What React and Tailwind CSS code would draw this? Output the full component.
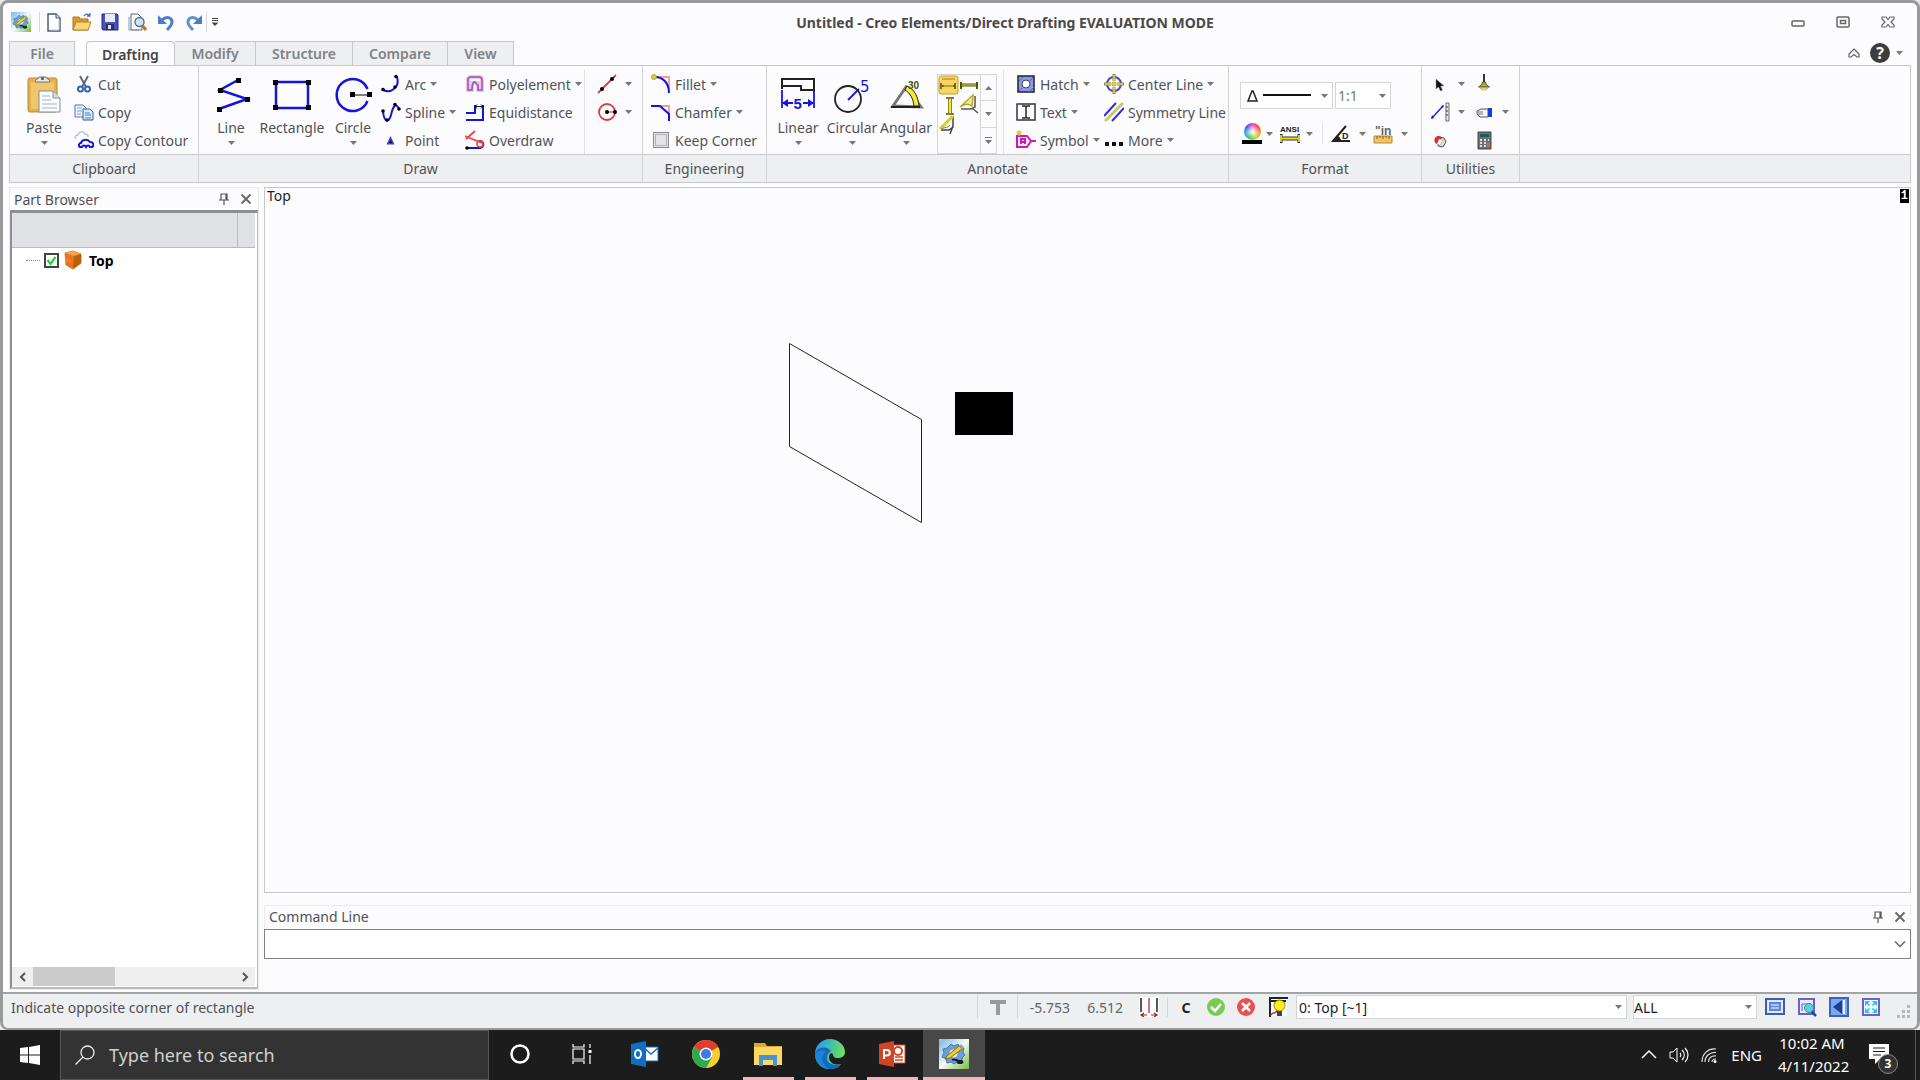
import { useState } from "react";

function Caret({ className = "" }) {
  return (
    <svg viewBox="0 0 7 4" className={`h-1 w-[7px] shrink-0 fill-[#777] ${className}`} aria-hidden="true">
      <path d="M0 0h7L3.5 4z" />
    </svg>
  );
}

function Icon({ size = "size-5", box = "0 0 20 20", children }) {
  return (
    <svg viewBox={box} className={`${size} shrink-0`} fill="none" aria-hidden="true">
      {children}
    </svg>
  );
}

const BLUE = "#1414e0";

/* ---------- quick access icons ---------- */

const AppIcon = ({ size = "size-5" }) => (
  <Icon size={size} box="0 0 30 30">
    <defs>
      <linearGradient id="appbg" x1="0" y1="0" x2="1" y2="1">
        <stop offset="0.1" stopColor="#8fc3e6" />
        <stop offset="0.5" stopColor="#f4faf6" />
        <stop offset="1" stopColor="#76b943" />
      </linearGradient>
    </defs>
    <path d="M0 0h30v30H0z" fill="url(#appbg)" />
    <path d="M12 5l3 2 4-2 2 3 4 1-1 4 2 3-3 3v4h-5l-3 2-3-2-4 1-1-4-4-2 2-4-1-4 4-1z" fill="#6d9fd3" stroke="#4276b4" />
    <circle cx="14.500" cy="14.500" r="4" fill="#dcebf7" />
    <path d="M8 17L20 7l3 3-12 9-5 1z" fill="#f3cf23" stroke="#84700f" />
    <path d="M20 7l2-2 3 3-2 2z" fill="#9fa3a8" />
    <path d="M13 21c3-2 6 2 10 1" stroke="#16202b" strokeWidth="2" />
    <ellipse cx="21" cy="23" rx="3.500" ry="2" fill="#16202b" />
  </Icon>
);

const NewIcon = () => (
  <Icon>
    <path d="M4 2h8l4 4v13H4z" fill="#fff" stroke="#3f5878" strokeWidth="1.400" />
    <path d="M12 2v4h4" fill="#cfdbe8" stroke="#3f5878" />
    <path d="M15 8v10H6" stroke="#b9c6d6" />
  </Icon>
);

const OpenIcon = () => (
  <Icon>
    <path d="M1 5h6l1 2h8v11H1z" fill="#d99a27" stroke="#a8761d" />
    <path d="M4 10h15l-3 8H1z" fill="#fbd57c" stroke="#b58224" />
    <path d="M12 4c2-3 4-2 6 0m0-3v3h-3" stroke="#4e73a5" strokeWidth="1.300" />
  </Icon>
);

const SaveIcon = () => (
  <Icon>
    <path d="M2 2h15l1 1v15H3l-1-1z" fill="#4b4fc0" stroke="#24287c" />
    <path d="M5 2h10v8H5z" fill="#e7eaf8" />
    <path d="M6 12h8v6H6z" fill="#2a2d66" />
    <path d="M8 13h3v4H8z" fill="#dfe3f4" />
  </Icon>
);

const PreviewIcon = () => (
  <Icon>
    <path d="M3 2h7l4 4v12H3z" fill="#f6f9fb" stroke="#556b7c" />
    <path d="M1 5v13h10" stroke="#8b9aa6" />
    <path d="M14 13l4 5" stroke="#b97a31" strokeWidth="3" />
    <circle cx="11.500" cy="10" r="4.500" fill="#cfe4f2" stroke="#5d6f7d" strokeWidth="1.400" />
  </Icon>
);

const UndoIcon = () => (
  <Icon>
    <path d="M6 8c4-4 10-3 10 2 0 3-2 5-5 8" stroke="#4a7cc8" strokeWidth="3" />
    <path d="M2 3v9h9z" fill="#4a7cc8" />
  </Icon>
);

const RedoIcon = () => (
  <Icon>
    <path d="M14 8C10 4 4 5 4 10c0 3 2 5 5 8" stroke="#5e93cc" strokeWidth="3" />
    <path d="M18 3v9H9z" fill="#4a7cc8" />
  </Icon>
);

/* ---------- ribbon icons ---------- */

const PasteIcon = () => (
  <Icon size="size-10" box="0 0 40 40">
    <rect x="4" y="3" width="29" height="34" rx="2" fill="#e3b04f" stroke="#b98a38" />
    <rect x="7" y="7" width="23" height="27" fill="#f0c56c" />
    <path d="M11 7c0-3 4-3 4-5h7c0 2 4 2 4 5z" fill="#e8ebed" stroke="#6c757b" />
    <circle cx="18.500" cy="3.500" r="1.500" fill="#555" />
    <path d="M15 16h14l7 7v14H15z" fill="#fbfcfe" stroke="#7d8fa6" />
    <path d="M29 16v7h7" fill="#d6dfe9" stroke="#7d8fa6" />
    <path d="M18 21h8m-8 4h9m-9 4h15m-15 4h15" stroke="#a2b0c1" />
  </Icon>
);

const CutIcon = () => (
  <Icon>
    <path d="M6 2l6 11M14 2L8 13" stroke="#5b6b7e" strokeWidth="2" />
    <circle cx="6.500" cy="15" r="2.500" stroke="#2d65b5" strokeWidth="2" />
    <circle cx="13.500" cy="15" r="2.500" stroke="#2d65b5" strokeWidth="2" />
  </Icon>
);

const CopyIcon = () => (
  <Icon>
    <path d="M1 3h8l3 3v9H1z" fill="#eef4fc" stroke="#4d79b3" />
    <path d="M3 6h5M3 9h5M3 12h4" stroke="#7ba0d2" />
    <path d="M9 7h7l3 3v8H9z" fill="#dbe8f9" stroke="#2f5f9f" />
    <path d="M11 11h5m-5 2h6m-6 3h6" stroke="#5482c0" />
  </Icon>
);

const ContourIcon = () => (
  <Icon>
    <path d="M2 9c-2-3 1-4 2-4 1-4 6-4 7-1 3 0 3 2 3 3" stroke="#b8c3cf" strokeWidth="1.500" />
    <path d="M6 17c-2-1-1-4 1-4 1-4 7-4 9-1 4 0 4 4 2 5h-2c-1-2-3-2-4 0-1-2-3-2-4 0z" stroke={BLUE} strokeWidth="2" />
  </Icon>
);

const LineIcon = () => (
  <Icon size="size-10" box="0 0 40 40">
    <path d="M27 5L9 15l27 9L8 34" stroke={BLUE} strokeWidth="2.500" />
    <path d="M25 3h5v5h-5zM7 13h5v5H7zM34 22h5v5h-5zM6 32h5v5H6z" fill="#000" />
  </Icon>
);

const RectIcon = () => (
  <Icon size="size-10" box="0 0 40 40">
    <path d="M4 7h32v26H4z" stroke={BLUE} strokeWidth="2.500" />
    <path d="M1 5h5v5H1zM34 5h5v5h-5zM1 30h5v5H1zM34 30h5v5h-5z" fill="#000" />
  </Icon>
);

const CircleIcon = () => (
  <Icon size="size-10" box="0 0 40 40">
    <path d="M34.500 14A16 16 0 1 0 34.500 26" stroke={BLUE} strokeWidth="2.500" />
    <path d="M20 20h16" stroke="#555" strokeWidth="1.500" />
    <path d="M17 17h5v5h-5zM34 17h5v5h-5z" fill="#000" />
  </Icon>
);

const ArcIcon = () => (
  <Icon>
    <path d="M2 16c8 4 17-3 14-13" stroke={BLUE} strokeWidth="2" />
    <circle cx="2" cy="15.500" r="1.800" fill="#000" />
    <circle cx="15" cy="2.500" r="1.800" fill="#000" />
    <circle cx="14" cy="13" r="1.800" fill="#000" />
  </Icon>
);

const SplineIcon = () => (
  <Icon>
    <path d="M2 9c1 12 6 12 8 4 2-9 5-13 8-6" stroke={BLUE} strokeWidth="2" />
    <circle cx="2" cy="9" r="1.800" fill="#000" />
    <circle cx="6" cy="18" r="1.800" fill="#000" />
    <circle cx="14" cy="2.500" r="1.800" fill="#000" />
    <circle cx="18" cy="7" r="1.800" fill="#000" />
  </Icon>
);

const PointIcon = () => (
  <Icon>
    <path d="M9.500 6l4 8.500h-8z" fill="#3c3cdc" />
    <path d="M9.500 10l1.500 3H8z" fill="#111" />
  </Icon>
);

const PolyIcon = () => (
  <Icon>
    <path d="M3 16V6c0-2 1-3 3-3h8c2 0 3 1 3 3v10h-4V9H7v7z" stroke="#f9c3d0" strokeWidth="4" />
    <path d="M3 16V6c0-2 1-3 3-3h8c2 0 3 1 3 3v10h-4v-5c-2 0-2-4-4-3s-2 4-2 8z" stroke="#7c5ad8" strokeWidth="1.500" />
  </Icon>
);

const EquiIcon = () => (
  <Icon>
    <path d="M1 11h9V3M1 18h17V3" stroke={BLUE} strokeWidth="2" />
    <path d="M10 4.500h8m-6-2l-2 2 2 2m4-4l2 2-2 2" stroke="#111" />
  </Icon>
);

const OverdrawIcon = () => (
  <Icon>
    <path d="M0 6l17 7M10 1L1 9" stroke="#ee4444" strokeWidth="1.800" />
    <path d="M2 18h13c5-1 4-8-1-7" stroke={BLUE} strokeWidth="2" />
    <circle cx="15" cy="14" r="3" stroke="#ee4444" strokeWidth="1.500" />
    <circle cx="2" cy="18" r="1.800" fill="#000" />
  </Icon>
);

const RedLineIcon = () => (
  <Icon>
    <path d="M1 19L19 1" stroke="#e03a3a" strokeWidth="1.800" />
    <circle cx="5" cy="15" r="2" fill="#000" />
    <circle cx="15" cy="5" r="2" fill="#000" />
  </Icon>
);

const RedCircleIcon = () => (
  <Icon>
    <circle cx="10" cy="10" r="8" stroke="#e03a3a" strokeWidth="1.800" />
    <path d="M10 10h8" stroke="#555" />
    <circle cx="10" cy="10" r="2" fill="#000" />
    <circle cx="18" cy="10" r="2" fill="#000" />
  </Icon>
);

const FilletIcon = () => (
  <Icon>
    <path d="M4 3h14v12" stroke="#f49a9a" strokeWidth="1.800" />
    <path d="M4 3c8 0 14 6 14 16" stroke={BLUE} strokeWidth="2" />
    <circle cx="3" cy="3" r="2.500" fill="#d9d63a" stroke="#8f8d21" strokeWidth="0.700" />
  </Icon>
);

const ChamferIcon = () => (
  <Icon>
    <path d="M8 4h10v10" stroke="#f49a9a" strokeWidth="1.800" />
    <path d="M0 4h9l9 8v7" stroke={BLUE} strokeWidth="2" />
  </Icon>
);

const LinearIcon = () => (
  <Icon size="size-10" box="0 0 40 40">
    <path d="M4 14V4h32v11H23v-4H4" stroke="#222" strokeWidth="2" />
    <path d="M4 15v18M36 16v17M5 28h10M25 28h10" stroke={BLUE} strokeWidth="1.800" />
    <path d="M4 28l6-4v8zM36 28l-6-4v8z" fill={BLUE} />
    <text x="15.500" y="34" fontSize="15" fontWeight="700" fill={BLUE} fontFamily="Liberation Sans">5</text>
  </Icon>
);

const CircularIcon = () => (
  <Icon size="size-10" box="0 0 40 40">
    <circle cx="16" cy="24" r="13" stroke="#222" strokeWidth="1.800" />
    <path d="M16 25l11-11" stroke={BLUE} strokeWidth="1.800" />
    <text x="28" y="17" fontSize="15" fill={BLUE} fontFamily="DejaVu Sans">5</text>
  </Icon>
);

const AngularIcon = () => (
  <Icon size="size-10" box="0 0 40 40">
    <path d="M7 31L20 12l15 20z" stroke="#777" strokeWidth="3" />
    <path d="M21 11c7 3 11 10 12 20h-5c-1-8-4-13-9-16z" fill="#f2ee2c" stroke="#222" />
    <path d="M5 32h29" stroke="#222" strokeWidth="2" />
    <text x="22" y="14" fontSize="10" fontWeight="700" fill="#4d4a0a" fontFamily="Liberation Sans">30</text>
  </Icon>
);

const GalleryArt = () => (
  <svg viewBox="0 0 42 78" className="h-[78px] w-[42px]" fill="none" aria-hidden="true">
    <rect x="1" y="1" width="19" height="18" rx="2" fill="#fad564" stroke="#c89a2c" />
    <path d="M4 4h13" stroke="#a77d1d" />
    <path d="M4 11h13M3 8v6M17 8v6" stroke="#4f4c0a" strokeWidth="1.500" />
    <path d="M6 11h9" stroke="#e8e22c" />
    <path d="M24 10h14" stroke="#55520d" strokeWidth="3" />
    <path d="M23 7v7M39 7v7" stroke="#55520d" strokeWidth="2" />
    <path d="M24 10h14" stroke="#e8e22c" />
    <path d="M12 24v14" stroke="#8d8616" strokeWidth="4" />
    <path d="M8 23h8M8 39h8" stroke="#55520d" strokeWidth="1.500" />
    <path d="M12 24v14" stroke="#f0ea3a" strokeWidth="2" />
    <path d="M23 34h10l4-2V21M34 33l6 5" stroke="#555" strokeWidth="1.500" />
    <path d="M22 32l13-12-1 11c-4-3-8-2-12 1z" fill="#efe9a5" stroke="#b6ac22" strokeWidth="1.500" />
    <path d="M3 55h8l4-3V41M15 51l-3 8" stroke="#444" strokeWidth="1.500" />
    <path d="M2 54l13-13" stroke="#d5cb2a" strokeWidth="3" />
    <path d="M3 54c4-2 7-1 9-4" stroke="#8d8616" />
  </svg>
);

const HatchIcon = () => (
  <Icon>
    <path d="M2 2h16v16H2z" fill="#8f96f0" stroke="#222" strokeWidth="1.500" />
    <circle cx="10" cy="10" r="4" fill="#fff" stroke="#444" />
    <path d="M3 7l4-4M3 17l3-3m7 4l5-5m-4-6l3-4" stroke="#5a61cd" />
  </Icon>
);

const TextIcon = () => (
  <Icon>
    <path d="M1 2h18v16H1z" fill="#fff" stroke="#333" strokeWidth="1.500" />
    <path d="M6 4h3l1 1 1-1h3M6 16h3l1-1 1 1h3M10 5v10" stroke="#222" strokeWidth="1.500" />
  </Icon>
);

const SymbolIcon = () => (
  <Icon>
    <path d="M1 6h10l4 5-4 6H1zM15 11h5" fill="#fff" stroke="#d811c6" strokeWidth="2" />
    <path d="M5 14V9h4v5M5 12h4" stroke="#d811c6" strokeWidth="2" />
    <circle cx="3" cy="3" r="2.500" fill="#e0cf3b" />
  </Icon>
);

const CenterIcon = () => (
  <Icon>
    <circle cx="10" cy="10" r="7" stroke="#4048d0" strokeWidth="2" />
    <path d="M10 0v20M0 10h20" stroke="#8d8433" strokeWidth="3" strokeDasharray="7 1 4 1 7" />
    <path d="M10 1v18M1 10h18" stroke="#e6da5c" strokeWidth="1.500" />
  </Icon>
);

const SymmetryIcon = () => (
  <Icon>
    <path d="M0 14L12 1M8 19L20 6" stroke="#2d33dc" strokeWidth="2" />
    <path d="M1 19L19 1" stroke="#cfc56a" strokeWidth="3" />
  </Icon>
);

const MoreIcon = () => (
  <Icon>
    <path d="M1 12h4v4H1zM8 12h4v4H8zM15 12h4v4h-4z" fill="#111" />
  </Icon>
);

const AnsiIcon = () => (
  <Icon>
    <text x="0" y="8" fontSize="8" fontWeight="700" fill="#222" fontFamily="Liberation Sans">ANSI</text>
    <path d="M1 10v9M19 10v9" stroke="#222" strokeWidth="3" />
    <path d="M2 14.500h16" stroke="#333" strokeWidth="4" />
    <path d="M1 11v7M19 11v7M2 14.500h16" stroke="#e5de2b" strokeWidth="1.800" />
  </Icon>
);

const AngleIcon = () => (
  <Icon>
    <path d="M15 2L2 17h17" stroke="#222" strokeWidth="2" />
    <path d="M7 12c2 1 3 3 3 5H3z" fill="#222" />
    <text x="11" y="15" fontSize="9" fontWeight="700" fill="#222" fontFamily="Liberation Sans">D</text>
  </Icon>
);

const RulerIcon = () => (
  <Icon>
    <path d="M1 12h18v7H1z" fill="#f0c565" stroke="#b58a31" />
    <path d="M4 12v3m3-3v2m3-2v3m3-3v2m3-2v3" stroke="#80601c" />
    <text x="2" y="11" fontSize="12" fontWeight="700" fill="#666" fontFamily="Liberation Sans">"in</text>
  </Icon>
);

const PointerIcon = () => (
  <Icon>
    <path d="M6 5v10l2.500-2 2 4 2-1-2-4H14z" fill="#111" stroke="#888" strokeWidth="0.500" />
  </Icon>
);

const LampIcon = () => (
  <Icon>
    <path d="M10 0v9" stroke="#222" strokeWidth="1.800" />
    <path d="M8.500 8h3l1 3 3 2H4.500l3-2z" fill="#b4b02a" stroke="#333" strokeWidth="0.800" />
    <path d="M6 14h8l-2 2H8z" fill="#f2ee67" stroke="#888" strokeWidth="0.500" />
  </Icon>
);

const MeasureIcon = () => (
  <Icon>
    <path d="M2 16L13 4" stroke={BLUE} strokeWidth="1.300" />
    <path d="M1 17l1-4 2 3zM14 3l-3 1 2 2z" fill={BLUE} />
    <path d="M16 1h3v18h-3z" fill="#eee" stroke="#667" />
    <path d="M16 5h2m-2 4h2m-2 4h2" stroke="#335" />
  </Icon>
);

const HandIcon = () => (
  <Icon>
    <path d="M14 7H7L3 9v3l3 3h8z" fill="#f3f3f3" stroke="#555" />
    <path d="M3 10h6m-5 2h5" stroke="#777" />
    <path d="M14 6h4v9h-4z" fill="#1c3bd8" />
  </Icon>
);

const EraserIcon = () => (
  <Icon>
    <path d="M9 7l5 1 2 4-3 5-5-1z" fill="#ddd" stroke="#555" />
    <path d="M5 8c2-3 6-2 7 0l-5 6c-3-1-3-4-2-6z" fill="#e02b2b" />
    <path d="M9 9l4 1-3 5-3-1z" fill="#fff" stroke="#999" strokeWidth="0.500" />
  </Icon>
);

const CalcIcon = () => (
  <Icon>
    <path d="M4 2h13v17H4z" fill="#6e7173" stroke="#444" />
    <path d="M6 4h9v3H6z" fill="#205c56" />
    <path d="M6 9h2v2H6zm4 0h2v2h-2zm4 0h1v2h-1zM6 12h2v2H6zm4 0h2v2h-2zM6 15h2v2H6zm4 0h2v2h-2z" fill="#ddd" />
    <path d="M13 13h3v4h-3z" fill="#d0644f" />
  </Icon>
);

/* ---------- controls ---------- */

function SmallButton({ icon, label, caret }) {
  return (
    <button className="flex h-7 items-center gap-1 whitespace-nowrap">
      {icon}
      <span>{label}</span>
      {caret && <Caret />}
    </button>
  );
}

function IconButton({ icon, label, caret }) {
  return (
    <button className="flex h-7 items-center gap-2" aria-label={label}>
      {icon}
      {caret && <Caret />}
    </button>
  );
}

function BigButton({ icon, label, caret, width }) {
  return (
    <button className={`flex flex-col items-center pt-[5px] ${width}`}>
      {icon}
      <span className="flex h-6 items-center">{label}</span>
      {caret && <Caret className="mt-0.5" />}
    </button>
  );
}

function Group({ title, width, children }) {
  return (
    <section className={`flex shrink-0 flex-col border-r border-[#d0d2d4] ${width}`}>
      <div className="flex h-[88px] pt-1">{children}</div>
      <h2 className="flex flex-1 items-center justify-center border-t border-[#c6c8ca] bg-[#eeeff1]">{title}</h2>
    </section>
  );
}

function Select({ label, options, className, selectClass = "" }) {
  return (
    <div className={`relative flex border border-[#d3d5d8] bg-white ${className}`}>
      <select aria-label={label} className={`w-full appearance-none bg-transparent outline-none ${selectClass}`}>
        {options.map((o) => (
          <option key={o}>{o}</option>
        ))}
      </select>
      <Caret className="pointer-events-none absolute top-1/2 right-1 -mt-0.5" />
    </div>
  );
}

function PinAndClose() {
  return (
    <div className="flex items-center gap-2.5">
      <button aria-label="Pin">
        <Icon size="size-3" box="0 0 12 12">
          <path d="M3 1h6v6H3zM8 1v6M1 7h10M6 7v5" stroke="#555" strokeWidth="1.200" />
        </Icon>
      </button>
      <button aria-label="Close">
        <Icon size="size-3" box="0 0 12 12">
          <path d="M1.500 1.500l9 9m0-9l-9 9" stroke="#666" strokeWidth="1.800" />
        </Icon>
      </button>
    </div>
  );
}

function TitleBar() {
  const tools = [
    ["New", <NewIcon />],
    ["Open", <OpenIcon />],
    ["Save", <SaveIcon />],
    ["Print preview", <PreviewIcon />],
    ["Undo", <UndoIcon />],
    ["Redo", <RedoIcon />],
  ];
  return (
    <header className="flex h-[38px] items-center">
      <div className="flex items-center pl-2">
        <AppIcon />
        <div className="ml-2 flex items-center gap-2 border-x border-[#d5d7da] pr-0.5 pl-1">
          {tools.map(([name, icon]) => (
            <button key={name} aria-label={name}>
              {icon}
            </button>
          ))}
        </div>
        <button aria-label="Customize toolbar" className="ml-1">
          <Icon size="size-2" box="0 0 8 8">
            <path d="M1 .5h6M1 2.500h6" stroke="#444" />
            <path d="M.5 4.500h7L4 8z" fill="#444" />
          </Icon>
        </button>
      </div>
      <h1 className="flex-1 text-center text-[14px] font-bold text-[#4a4a4a]">
        Untitled - Creo Elements/Direct Drafting EVALUATION MODE
      </h1>
      <div className="flex items-center justify-end gap-[31px] pr-[22px]">
        <button aria-label="Minimize">
          <Icon size="size-3.5" box="0 0 14 14">
            <rect x="1" y="6" width="12" height="5" rx="1" stroke="#666" strokeWidth="1.500" />
          </Icon>
        </button>
        <button aria-label="Restore">
          <Icon size="size-3.5" box="0 0 14 14">
            <rect x="1" y="2" width="12" height="10" rx="1" stroke="#666" strokeWidth="1.500" />
            <rect x="4.500" y="5.500" width="5" height="3" stroke="#666" strokeWidth="1.500" />
          </Icon>
        </button>
        <button aria-label="Close window">
          <Icon size="size-3.5" box="0 0 14 14">
            <path d="M1 2h4l2 2.500L9 2h4v2l-3 3 3 3v2H9L7 9.500 5 12H1v-2l3-3-3-3z" stroke="#666" strokeWidth="1.200" />
          </Icon>
        </button>
      </div>
    </header>
  );
}

function Tabs() {
  const [active, setActive] = useState("Drafting");
  const tabs = [
    ["File", "w-[66px] mr-[11px]"],
    ["Drafting", "w-[89px]"],
    ["Modify", "w-[81px]"],
    ["Structure", "w-[97px]"],
    ["Compare", "w-[95px]"],
    ["View", "w-[66px]"],
  ];
  return (
    <nav className="flex h-6 items-stretch justify-between px-1.5">
      <div className="flex">
        {tabs.map(([name, width]) => (
          <button
            key={name}
            onClick={() => setActive(name)}
            className={`border-t border-r font-semibold ${width} ${
              name === active
                ? "-mb-px rounded-t border-l border-[#c6c8ca] bg-[#fcfcfe] text-[#444]"
                : "border-[#c6c8ca] bg-[#eeeff1] text-[#808285] first:border-l"
            }`}
          >
            {name}
          </button>
        ))}
      </div>
      <div className="flex items-center gap-2.5">
        <button aria-label="Collapse ribbon">
          <Icon size="size-3" box="0 0 12 12">
            <path d="M6 2l5 5v3H9L6 7.500 3 10H1V7z" stroke="#666" strokeWidth="1.200" />
          </Icon>
        </button>
        <button aria-label="Help" className="flex items-center gap-1.5 pr-2">
          <span className="flex size-5 items-center justify-center rounded-full bg-[#3d3d3d] text-base font-bold text-white">
            ?
          </span>
          <Caret />
        </button>
      </div>
    </nav>
  );
}

function Ribbon() {
  return (
    <div className="mx-1.5 flex h-[118px] border border-[#c6c8ca]">
      <Group title="Clipboard" width="w-[189px]">
        <BigButton icon={<PasteIcon />} label="Paste" caret width="ml-1 w-15" />
        <div>
          <SmallButton icon={<CutIcon />} label="Cut" />
          <SmallButton icon={<CopyIcon />} label="Copy" />
          <SmallButton icon={<ContourIcon />} label="Copy Contour" />
        </div>
      </Group>

      <Group title="Draw" width="w-[444px]">
        <BigButton icon={<LineIcon />} label="Line" caret width="ml-1 w-14" />
        <BigButton icon={<RectIcon />} label="Rectangle" width="w-[66px]" />
        <BigButton icon={<CircleIcon />} label="Circle" caret width="w-14" />
        <div className="w-[84px]">
          <SmallButton icon={<ArcIcon />} label="Arc" caret />
          <SmallButton icon={<SplineIcon />} label="Spline" caret />
          <SmallButton icon={<PointIcon />} label="Point" />
        </div>
        <div className="w-[120px] border-r border-[#e2e3e6]">
          <SmallButton icon={<PolyIcon />} label="Polyelement" caret />
          <SmallButton icon={<EquiIcon />} label="Equidistance" />
          <SmallButton icon={<OverdrawIcon />} label="Overdraw" />
        </div>
        <div className="pl-3">
          <IconButton icon={<RedLineIcon />} label="Construction line" caret />
          <IconButton icon={<RedCircleIcon />} label="Construction circle" caret />
        </div>
      </Group>

      <Group title="Engineering" width="w-[124px]">
        <div className="pl-2">
          <SmallButton icon={<FilletIcon />} label="Fillet" caret />
          <SmallButton icon={<ChamferIcon />} label="Chamfer" caret />
          <label className="flex h-7 items-center gap-1.5 whitespace-nowrap">
            <input
              type="checkbox"
              className="ml-0.5 size-4 appearance-none border border-[#8c8c8c] bg-[#e4e4e6] outline-1 -outline-offset-3 outline-[#b5b5b5]"
            />
            Keep Corner
          </label>
        </div>
      </Group>

      <Group title="Annotate" width="w-[462px]">
        <BigButton icon={<LinearIcon />} label="Linear" caret width="ml-1 w-[54px]" />
        <BigButton icon={<CircularIcon />} label="Circular" caret width="w-[54px]" />
        <BigButton icon={<AngularIcon />} label="Angular" caret width="w-[54px]" />
        <div className="mt-1 ml-1 flex h-20 w-[60px] border border-[#d3d5d8]">
          <button aria-label="Dimension styles">
            <GalleryArt />
          </button>
          <div className="flex flex-1 flex-col divide-y divide-[#d3d5d8] border-l border-[#d3d5d8]">
            <button aria-label="Scroll up" className="flex flex-1 items-center justify-center">
              <Caret className="rotate-180" />
            </button>
            <button aria-label="Scroll down" className="flex flex-1 items-center justify-center">
              <Caret />
            </button>
            <button aria-label="Expand" className="flex flex-1 flex-col items-center justify-center gap-0.5">
              <span className="h-px w-[7px] bg-[#777]" />
              <Caret />
            </button>
          </div>
        </div>
        <div className="ml-1.5 w-[101px] border-l border-[#e2e3e6] pl-3">
          <SmallButton icon={<HatchIcon />} label="Hatch" caret />
          <SmallButton icon={<TextIcon />} label="Text" caret />
          <SmallButton icon={<SymbolIcon />} label="Symbol" caret />
        </div>
        <div>
          <SmallButton icon={<CenterIcon />} label="Center Line" caret />
          <SmallButton icon={<SymmetryIcon />} label="Symmetry Line" />
          <SmallButton icon={<MoreIcon />} label="More" caret />
        </div>
      </Group>

      <Group title="Format" width="w-[193px]">
        <div className="flex flex-col gap-3.5 pt-3 pl-[11px]">
          <div className="flex gap-0.5">
            <button
              aria-label="Line style"
              className="flex h-[27px] w-[93px] items-center justify-between border border-[#d3d5d8] bg-white pr-1 pl-1.5"
            >
              <svg viewBox="0 0 64 12" className="h-3 w-16" fill="none" aria-hidden="true">
                <path d="M1 11L5 1h1l4 10z" stroke="#222" strokeWidth="1.500" />
                <path d="M16 5h48" stroke="#111" strokeWidth="2" />
              </svg>
              <Caret />
            </button>
            <Select label="Scale" options={["1:1", "1:2", "2:1"]} className="h-[27px] w-14" selectClass="px-0.5 text-[#777]" />
          </div>
          <div className="flex">
            <button aria-label="Color" className="flex w-[37px] items-center gap-1 pl-0.5">
              <span className="flex flex-col items-center">
                <span className="size-[17px] rounded-full bg-[radial-gradient(circle,white,transparent_60%),conic-gradient(#e64bd0,#f04a4a,#f5a142,#b7dd3c,#3fc95b,#35b5dd,#5a57e6,#e64bd0)]" />
                <span className="h-1 w-5 bg-black" />
              </span>
              <Caret />
            </button>
            <button aria-label="Dimension standard" className="flex w-[46px] items-center gap-1.5 border-r border-[#e2e3e6] pl-[3px]">
              <AnsiIcon />
              <Caret />
            </button>
            <button aria-label="Angle unit" className="flex w-[42px] items-center gap-2 pl-2">
              <AngleIcon />
              <Caret />
            </button>
            <button aria-label="Length unit" className="flex items-center gap-2 pl-2">
              <RulerIcon />
              <Caret />
            </button>
          </div>
        </div>
      </Group>

      <Group title="Utilities" width="w-[98px]">
        <div className="grid grid-cols-[44px_1fr] content-start pl-2">
          <IconButton icon={<PointerIcon />} label="Select" caret />
          <IconButton icon={<LampIcon />} label="Highlight" />
          <IconButton icon={<MeasureIcon />} label="Measure" caret />
          <IconButton icon={<HandIcon />} label="Pick" caret />
          <IconButton icon={<EraserIcon />} label="Delete" />
          <IconButton icon={<CalcIcon />} label="Calculator" />
        </div>
      </Group>

      <div className="flex flex-1 flex-col">
        <div className="h-[88px]" />
        <div className="flex-1 border-t border-[#c6c8ca] bg-[#eeeff1]" />
      </div>
    </div>
  );
}

function PartBrowser() {
  return (
    <aside className="mb-0.5 flex w-[250px] shrink-0 flex-col border border-[#ececf0]">
      <div className="flex h-[22px] items-center justify-between pr-1.5 pl-1">
        <h2>Part Browser</h2>
        <PinAndClose />
      </div>
      <div className="flex flex-1 flex-col border-2 border-t-3 border-r border-[#8e8e90] border-r-[#bbb] border-b-[#bbb] bg-white pr-0.5 pb-px">
        <div className="flex h-[35px] border-b border-[#b8babd] bg-[#dfe1e4]">
          <div className="flex-1 border-r border-[#b8babd]" />
          <div className="w-[17px]" />
        </div>
        <label className="flex h-6 items-center pl-3.5 font-bold text-black">
          <span className="w-3.5 border-t border-dotted border-[#888]" />
          <input type="checkbox" defaultChecked className="peer sr-only" />
          <span className="ml-1 flex size-[15px] items-center justify-center border-2 border-[#444] bg-white">
            <Icon size="size-[11px]" box="0 0 11 11">
              <path d="M1.500 5l3 4 5-7" stroke="#25d043" strokeWidth="2.200" />
            </Icon>
          </span>
          <span className="mr-1.5 ml-1">
            <Icon>
              <path d="M2 3l8-2 8 3v9l-8 6-7-4z" fill="#e8731a" stroke="#e8731a" strokeLinejoin="round" />
              <path d="M2 3l8-2 8 3-7 2z" fill="#f9a552" />
              <path d="M11 6l7-2v9l-8 6z" fill="#b9600f" />
              <path d="M4 8v4m3-3v4" stroke="#f79a4c" />
            </Icon>
          </span>
          Top
        </label>
        <div className="flex-1" />
        <div className="flex h-[19px] items-center bg-[#efefef]">
          <button aria-label="Scroll left" className="flex w-[21px] justify-center">
            <Icon size="size-2.5" box="0 0 10 10">
              <path d="M7 1L3 5l4 4" stroke="#555" strokeWidth="2" />
            </Icon>
          </button>
          <div className="h-full w-[82px] bg-[#cbcbcb]" />
          <div className="flex-1" />
          <button aria-label="Scroll right" className="flex w-[21px] justify-center">
            <Icon size="size-2.5" box="0 0 10 10">
              <path d="M3 1l4 4-4 4" stroke="#555" strokeWidth="2" />
            </Icon>
          </button>
        </div>
      </div>
    </aside>
  );
}

function Canvas() {
  return (
    <div className="relative flex flex-1 items-start justify-between border border-[#c6c8ca] text-[#1c1c2c]">
      <span className="pl-0.5 leading-4">Top</span>
      <span className="mt-px mr-px bg-black px-px font-['Liberation_Mono',monospace] text-xs leading-[14px] font-bold text-white">
        1
      </span>
      <svg className="absolute inset-0 size-full" fill="none" aria-hidden="true">
        <path d="M524.500 155.500l132 76v103l-132-76z" stroke="#222" />
        <path d="M690 204h58v43h-58z" fill="#000" />
      </svg>
    </div>
  );
}

function CommandLine() {
  return (
    <div className="mt-3">
      <div className="flex h-6 items-center justify-between border border-b-0 border-[#ececf0] pr-1 pb-0.5 pl-1">
        <label htmlFor="command">Command Line</label>
        <PinAndClose />
      </div>
      <div className="flex h-[30px] items-center border border-[#808080] bg-white pr-1">
        <input id="command" type="text" className="h-full flex-1 px-1 outline-none" />
        <button aria-label="History">
          <Icon size="size-3" box="0 0 12 12">
            <path d="M1 3.500l5 5 5-5" stroke="#666" strokeWidth="1.500" />
          </Icon>
        </button>
      </div>
    </div>
  );
}

function StatusBar() {
  return (
    <footer className="flex h-[36px] shrink-0 items-start border-t-2 border-[#a3a3a5] bg-[#eeeff1] pt-px">
      <p className="flex h-6 flex-1 items-center pl-2">Indicate opposite corner of rectangle</p>
      <div className="flex h-6 items-center">
        <span className="flex w-[41px] items-center justify-center self-stretch border-x border-[#d5d7da]">
          <Icon size="size-4" box="0 0 16 16">
            <path d="M0 1h16v4h-6v11H6V5H0z" fill="#999" />
          </Icon>
        </span>
        <span className="w-[52px] text-right text-[#666]">-5.753</span>
        <span className="w-[53px] text-right text-[#666]">6.512</span>
        <button aria-label="Snap" className="ml-4 border-r border-[#d5d7da] pr-2">
          <Icon>
            <path d="M0 0h20v20H0z" fill="#fff" />
            <path d="M2 1v14M18 1v14" stroke="#222" strokeWidth="1.500" />
            <path d="M10 1v15M3 18h5m4 0h5M5 16l-3 2 3 2m10-4l3 2-3 2" stroke="#a02020" strokeWidth="1.200" />
          </Icon>
        </button>
        <button className="w-9 font-bold text-[#222]">C</button>
        <button aria-label="Accept" className="mr-2.5 ml-0.5">
          <Icon>
            <circle cx="10" cy="10" r="9" fill="#78cc55" />
            <path d="M5 10l4 4 6-7" stroke="#fff" strokeWidth="2.500" />
          </Icon>
        </button>
        <button aria-label="Cancel" className="mr-3">
          <Icon>
            <circle cx="10" cy="10" r="9" fill="#e9504f" />
            <path d="M6 6l8 8m0-8l-8 8" stroke="#fff" strokeWidth="2.500" />
          </Icon>
        </button>
        <button aria-label="Hint" className="mr-2">
          <Icon>
            <path d="M1 1h18v18H1z" fill="#fff" />
            <path d="M2 20V1h18M3 4h15" stroke="#222" strokeWidth="2" />
            <path d="M3 18c3-5 4 1 6-5" stroke="#c33" strokeWidth="1.500" />
            <path d="M9 14h5v5H9z" fill="#444" />
            <circle cx="11.500" cy="8.500" r="5.500" fill="#fbf312" stroke="#6c6810" strokeWidth="0.800" />
          </Icon>
        </button>
        <Select label="Active part" options={["0: Top [~1]"]} className="h-6 w-[331px]" selectClass="px-0.5 text-[#1c1c2c]" />
        <Select label="Filter" options={["ALL"]} className="ml-1.5 h-6 w-[124px]" selectClass="text-[#1c1c2c]" />
        <div className="flex gap-3 pl-2">
          <button aria-label="Window">
            <Icon>
              <path d="M1 2h18v15H1z" fill="#dfe9fb" stroke="#3b5fae" strokeWidth="2" />
              <path d="M4 5h12v9H4z" fill="#5c86dd" />
              <path d="M6 8h8m-8 3h8" stroke="#fff" />
            </Icon>
          </button>
          <button aria-label="Zoom window">
            <Icon>
              <path d="M2 2h15v15H2z" fill="#e9ecfc" stroke="#6a62c8" strokeWidth="2" />
              <path d="M5 14V7h9" stroke="#4764c0" />
              <path d="M14 14l5 5" stroke="#1c4a9c" strokeWidth="2.500" />
              <circle cx="12" cy="11" r="4.500" fill="#5fd1dc" stroke="#2e90a8" />
            </Icon>
          </button>
          <button aria-label="Previous view">
            <Icon>
              <path d="M1 1h18v18H1z" fill="#7fa6ea" stroke="#3563bd" strokeWidth="2" />
              <path d="M13 3v14L4 10z" fill="#1b3f98" />
              <path d="M15 3v14" stroke="#e6effd" strokeWidth="2" />
            </Icon>
          </button>
          <button aria-label="Fit">
            <Icon>
              <path d="M2 2h16v16H2z" fill="#e8fafe" stroke="#6a62c8" strokeWidth="2" />
              <path d="M4 4h5L4 9zM16 4v5l-5-5zM4 16v-5l5 5zM16 16h-5l5-5z" fill="#35bfe0" />
              <path d="M5 5l10 10M15 5L5 15" stroke="#35bfe0" strokeWidth="1.500" />
              <circle cx="10" cy="10" r="2" fill="#fff" />
            </Icon>
          </button>
        </div>
        <span className="mr-1.5 ml-4 self-end">
          <Icon size="size-3.5" box="0 0 14 14">
            <path d="M10 0h3v3h-3zM5 5h3v3H5zM10 5h3v3h-3zM0 10h3v3H0zM5 10h3v3H5zM10 10h3v3h-3z" fill="#b6b7b9" />
          </Icon>
        </span>
      </div>
    </footer>
  );
}

/* ---------- taskbar ---------- */

const TaskIcon = ({ children }) => (
  <Icon size="size-[30px]" box="0 0 30 30">
    {children}
  </Icon>
);

const TASKS = [
  {
    name: "Cortana",
    icon: (
      <TaskIcon>
        <circle cx="15" cy="15" r="8.500" stroke="#fff" strokeWidth="2.500" />
      </TaskIcon>
    ),
  },
  {
    name: "Task View",
    icon: (
      <TaskIcon>
        <path d="M6 10h11v10H6zM6 5v3h11V5M6 25v-3h11v3M23 5v4M23 16v9" stroke="#fff" strokeWidth="1.200" />
        <path d="M21.500 11h3v3h-3z" fill="#fff" />
      </TaskIcon>
    ),
  },
  {
    name: "Outlook",
    icon: (
      <TaskIcon>
        <path d="M15 8h14v14H15z" fill="#fff" stroke="#0f6fc0" />
        <path d="M15 9l7 6 7-6" stroke="#0f6fc0" strokeWidth="1.500" />
        <path d="M2 5l15-3v26L2 25z" fill="#0f6fc0" />
        <ellipse cx="9" cy="15" rx="3" ry="4" stroke="#fff" strokeWidth="2" />
      </TaskIcon>
    ),
  },
  {
    name: "Chrome",
    icon: (
      <TaskIcon>
        <circle cx="15" cy="15" r="14" fill="#f9cd2e" />
        <path d="M15 15L2.900 8A14 14 0 0 1 27.100 8z" fill="#e33b2e" />
        <path d="M15 1a14 14 0 0 1 12.100 7H15z" fill="#e33b2e" />
        <path d="M2.900 8A14 14 0 0 0 15 29l6-10.500L15 15z" fill="#2da94f" />
        <circle cx="15" cy="15" r="6.500" fill="#fff" />
        <circle cx="15" cy="15" r="5" fill="#3b79e8" />
      </TaskIcon>
    ),
  },
  {
    name: "File Explorer",
    open: true,
    icon: (
      <TaskIcon>
        <path d="M1 4h11l2 3h15v19H1z" fill="#e0a92b" />
        <path d="M1 8h28v18H1z" fill="#fbd766" />
        <path d="M6 16h18v11h-4v-6H10v6H6z" fill="#4195d1" />
      </TaskIcon>
    ),
  },
  {
    name: "Edge",
    open: true,
    icon: (
      <TaskIcon>
        <defs>
          <linearGradient id="edge" x1="0" y1="0" x2="1" y2="0.300">
            <stop offset="0.200" stopColor="#2aa4e0" />
            <stop offset="1" stopColor="#6be35a" />
          </linearGradient>
        </defs>
        <path d="M15 0C6 0 0 7 0 15c0 9 7 15 15 15 5 0 9-2 11-5-6 2-12-1-12-7 0-2 1-3 2-4 3 0 1 5 6 5 5 0 8-2 8-6C30 6 23 0 15 0z" fill="url(#edge)" />
        <path d="M0 15C1 8 11 6 16 12c-2 1-4 3-4 7 0 5 5 8 14 6-2 3-6 5-11 5C7 30 0 24 0 15z" fill="#1668bd" />
        <path d="M9 14c-4 6-1 14 7 16-10 1-16-7-16-15 3-4 8-4 11-3z" fill="#1a86d6" />
      </TaskIcon>
    ),
  },
  {
    name: "PowerPoint",
    open: true,
    icon: (
      <TaskIcon>
        <path d="M15 6h13v18H15z" fill="#fff" stroke="#cf4526" />
        <path d="M18 18h8m-8 3h8" stroke="#cf4526" strokeWidth="1.500" />
        <circle cx="21" cy="12" r="4" stroke="#cf4526" strokeWidth="2" />
        <path d="M2 5l15-3v26L2 25z" fill="#cf4526" />
        <path d="M7 20v-9h3a2.500 2.500 0 0 1 0 5.500H7" stroke="#fff" strokeWidth="2" />
      </TaskIcon>
    ),
  },
  { name: "Creo Drafting", open: true, active: true, icon: <AppIcon size="size-[30px]" /> },
];

function Taskbar() {
  return (
    <div className="flex h-[50px] shrink-0 items-stretch bg-[#1c1c1c] text-white">
      <button aria-label="Start" className="flex w-[60px] items-center justify-center">
        <Icon>
          <path d="M0 3l8-1v7.500H0zM9 2l11-2v9.500H9zM0 10.500h8V18l-8-1zM9 10.500h11V20L9 18z" fill="#fff" />
        </Icon>
      </button>
      <label className="flex w-[429px] items-center gap-3.5 border border-[#565656] bg-[#333] pl-3.5">
        <Icon>
          <circle cx="12.500" cy="7.500" r="6.500" stroke="#eee" strokeWidth="1.300" />
          <path d="M8 12l-7.500 7.500" stroke="#eee" strokeWidth="1.300" />
        </Icon>
        <input
          type="text"
          aria-label="Search"
          placeholder="Type here to search"
          className="w-80 bg-transparent text-[18px] outline-none placeholder:text-[#d0d0d0]"
        />
      </label>
      {TASKS.map((t) => (
        <button
          key={t.name}
          aria-label={t.name}
          className={`flex w-[62px] flex-col items-center ${t.active ? "bg-[#484848]" : ""}`}
        >
          <span className="flex flex-1 items-center">{t.icon}</span>
          <span className={`h-[3px] ${t.active ? "w-full" : "w-[51px]"} ${t.open ? "bg-[#f6b4ba]" : ""}`} />
        </button>
      ))}
      <div className="flex flex-1 items-center justify-end">
        <button aria-label="Show hidden icons">
          <Icon size="size-4" box="0 0 16 16">
            <path d="M1 11l7-7 7 7" stroke="#fff" strokeWidth="1.500" />
          </Icon>
        </button>
        <button aria-label="Volume" className="ml-3">
          <Icon>
            <path d="M1 7h3l4-4v14l-4-4H1z" stroke="#fff" />
            <path d="M11 8c1 1 1 3 0 4m2-7c3 3 3 7 0 10m3-12c4 4 4 10 0 14" stroke="#fff" strokeWidth="1.200" />
          </Icon>
        </button>
        <button aria-label="Network" className="ml-3">
          <Icon size="size-4" box="0 0 16 16">
            <path d="M1 15C1 7 7 1 15 2M4 15C4 9 9 5 15 5.500M7.500 15c0-4 3-6.500 7.500-6M11 15c0-2 1-3 4-3" stroke="#ddd" strokeWidth="1.200" />
            <circle cx="14" cy="14.500" r="1.500" fill="#fff" />
          </Icon>
        </button>
        <button className="ml-3.5 text-[15px]">ENG</button>
        <time className="ml-4 w-[68px] text-center text-[15px] leading-[23px]">
          10:02 AM
          <br />
          4/11/2022
        </time>
        <button aria-label="Notifications" className="relative mr-[17px] ml-[22px] size-[30px]">
          <Icon size="size-[30px]" box="0 0 30 30">
            <path d="M1 4h20v15H12l-5 5v-5H1z" fill="#fff" />
            <path d="M5 8h12M5 11.500h12M5 15h8" stroke="#1c1c1c" strokeWidth="1.200" />
          </Icon>
          <span className="absolute right-0 -bottom-1 flex size-5 items-center justify-center rounded-full border border-[#888] bg-[#333] text-xs font-bold">
            3
          </span>
        </button>
        <span className="h-full w-[5px] border-l border-[#555]" />
      </div>
    </div>
  );
}

export default function App() {
  return (
    <div className="flex h-screen flex-col bg-[#e8e8e8] font-['Noto_Sans',sans-serif] text-[14px] text-[#505256]">
      <div className="flex min-h-0 flex-1 flex-col overflow-hidden rounded-lg border-3 border-[#999] border-b-2 bg-[#fcfcfe]">
        <TitleBar />
        <Tabs />
        <Ribbon />
        <main className="flex min-h-0 flex-1 gap-[5px] px-1.5 pt-1">
          <PartBrowser />
          <div className="flex min-w-0 flex-1 flex-col pb-[33px]">
            <Canvas />
            <CommandLine />
          </div>
        </main>
        <StatusBar />
      </div>
      <Taskbar />
    </div>
  );
}
